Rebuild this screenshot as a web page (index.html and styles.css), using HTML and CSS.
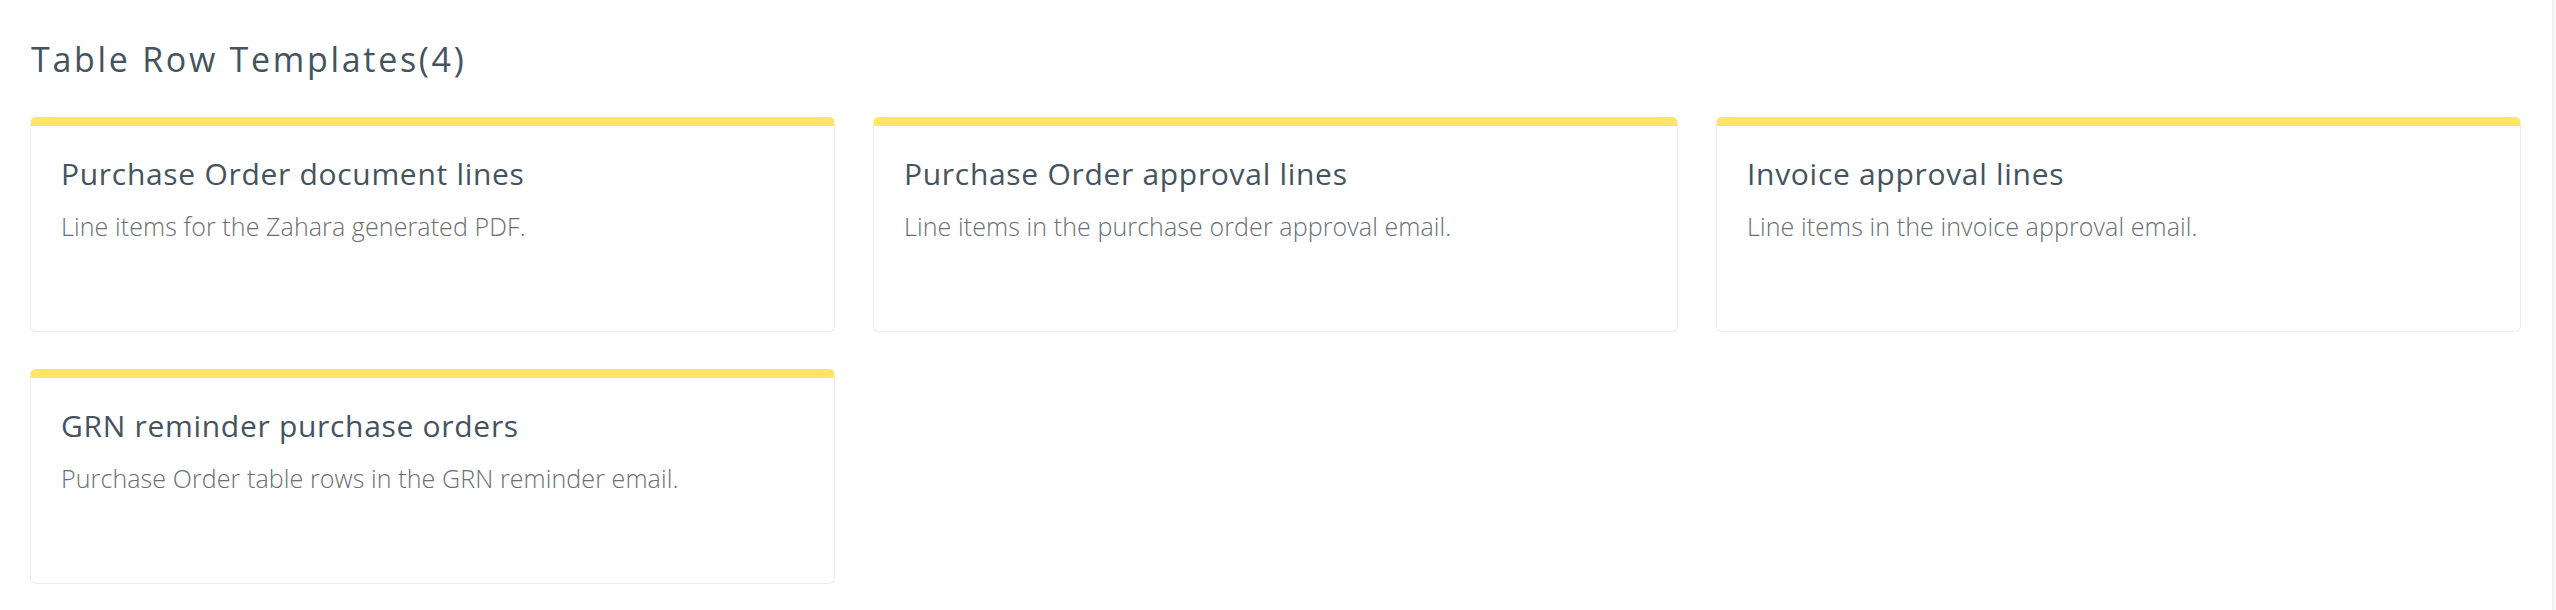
FILE: index.html
```html
<!DOCTYPE html>
<html lang="en">
<head>
<meta charset="utf-8">
<title>Table Row Templates</title>
<link rel="stylesheet" href="styles.css">
</head>
<body>
<div class="page">
  <main class="main">
    <h1 class="heading">Table Row Templates(4)</h1>
    <div class="grid">
      <div class="card">
        <h2 class="card-title">Purchase Order document lines</h2>
        <p class="card-desc">Line items for the Zahara generated PDF.</p>
      </div>
      <div class="card">
        <h2 class="card-title">Purchase Order approval lines</h2>
        <p class="card-desc">Line items in the purchase order approval email.</p>
      </div>
      <div class="card">
        <h2 class="card-title">Invoice approval lines</h2>
        <p class="card-desc">Line items in the invoice approval email.</p>
      </div>
      <div class="card">
        <h2 class="card-title">GRN reminder purchase orders</h2>
        <p class="card-desc">Purchase Order table rows in the GRN reminder email.</p>
      </div>
    </div>
  </main>
  <div class="scroll-track"></div>
</div>
</body>
</html>
```

FILE: styles.css
```css
* { box-sizing: border-box; }
html, body { margin: 0; padding: 0; background: #ffffff; }
body { font-family: "Open Sans", "Noto Sans", sans-serif; }

.page {
  display: flex;
  min-height: 610px;
}

.main {
  flex: 1;
  padding: 36px 31px 0 30px;
}

.heading {
  margin: 0;
  padding-left: 1px;
  font-size: 34px;
  line-height: 46px;
  font-weight: 500;
  color: #45535f;
  letter-spacing: 2.7px;
}

.grid {
  margin-top: 35px;
  display: grid;
  grid-template-columns: repeat(3, 805px);
  column-gap: 38px;
  row-gap: 37px;
}

.card {
  height: 215px;
  border: 1px solid #ececf0;
  border-top: 9px solid #ffe566;
  border-radius: 6px;
  padding: 28px 30px 0 30px;
}

.card-title {
  margin: 0;
  font-size: 30px;
  line-height: 40px;
  font-weight: 500;
  color: #45535f;
  letter-spacing: 0.7px;
}

.card-desc {
  margin: 15px 0 0 0;
  font-size: 25px;
  line-height: 34px;
  font-weight: 300;
  color: #696e73;
  letter-spacing: 0.1px;
}

.scroll-track {
  width: 5px;
  flex: none;
  background: #f6f6f9;
  border-left: 1px solid #ececf0;
}
```
